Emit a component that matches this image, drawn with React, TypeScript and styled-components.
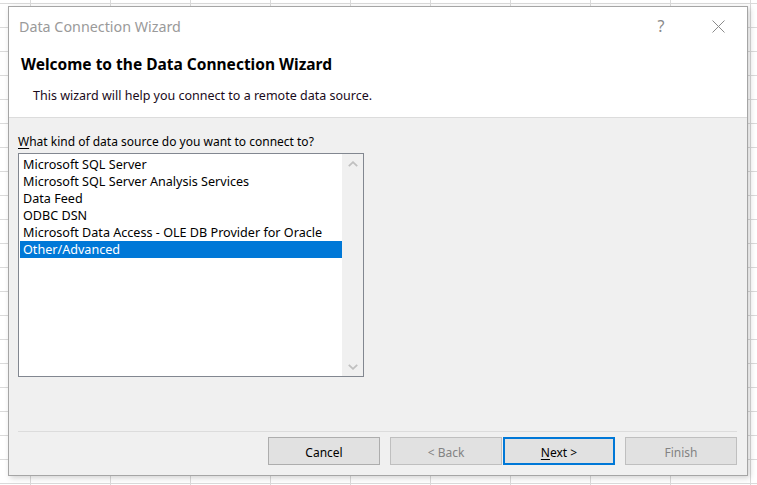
import React from "react";
import styled, { createGlobalStyle } from "styled-components";

const GlobalStyle = createGlobalStyle`
  html, body {
    margin: 0;
    padding: 0;
  }
  body {
    font-family: "Noto Sans", "Segoe UI", sans-serif;
    font-size: 12px;
    color: #000;
  }
`;

const Sheet = styled.div`
  width: 757px;
  height: 485px;
  box-sizing: border-box;
  padding: 6px 0 0 8px;
  background-color: #ffffff;
  background-image: linear-gradient(to right, #dadada 1px, transparent 1px),
    linear-gradient(to bottom, #dadada 1px, transparent 1px);
  background-size: 80px 24px;
  background-position: 30px 3px;
  overflow: hidden;
`;

const Dialog = styled.div`
  width: 740px;
  height: 470px;
  box-sizing: border-box;
  border: 1px solid #a5a5a5;
  background: #f0f0f0;
  box-shadow: 2px 2px 6px rgba(0, 0, 0, 0.18);
  display: flex;
  flex-direction: column;
`;

const TitleBar = styled.div`
  height: 38px;
  display: flex;
  align-items: center;
  background: #ffffff;
  padding: 0 0 0 10px;
`;

const Title = styled.div`
  flex: 1;
  font-size: 14.3px;
  color: #9a9a9a;
  padding-top: 1px;
`;

const TitleButton = styled.div<{ $w: number }>`
  width: ${(p) => p.$w}px;
  height: 30px;
  display: flex;
  align-items: center;
  justify-content: center;
  color: #8a8a8a;
  font-size: 16px;
`;

const Header = styled.div`
  background: #ffffff;
  height: 72px;
  border-bottom: 1px solid #dcdcdc;
  padding: 0 0 0 12px;
  display: flex;
  flex-direction: column;
`;

const Heading = styled.div`
  font-size: 15.5px;
  font-weight: 700;
  margin-top: 9px;
  line-height: 20px;
`;

const SubHeading = styled.div`
  font-size: 12.5px;
  margin: 14px 0 0 12px;
  line-height: 16px;
  color: #1a0a1a;
`;

const Body = styled.div`
  flex: 1;
  padding: 15px 0 0 9px;
  display: flex;
  flex-direction: column;
`;

const Label = styled.div`
  line-height: 17px;
  margin-bottom: 3px;
  u {
    text-decoration: underline;
    text-underline-offset: 2px;
  }
`;

const ListBox = styled.div`
  width: 346px;
  height: 224px;
  box-sizing: border-box;
  border: 1px solid #828790;
  background: #ffffff;
  display: flex;
`;

const Items = styled.div`
  flex: 1;
  padding: 2px 0 0 1px;
`;

const Item = styled.div<{ $selected?: boolean }>`
  height: 17px;
  line-height: 17px;
  font-size: 12.6px;
  padding-left: 3px;
  background: ${(p) => (p.$selected ? "#0078d7" : "transparent")};
  color: ${(p) => (p.$selected ? "#ffffff" : "#000000")};
  white-space: nowrap;
`;

const ScrollBar = styled.div`
  width: 21px;
  background: #f0f0f0;
  display: flex;
  flex-direction: column;
  justify-content: space-between;
  align-items: center;
  padding: 7px 0 6px;
`;

const Footer = styled.div`
  margin: 0 10px 0 9px;
  border-top: 1px solid #dcdcdc;
  padding: 5px 0 10px;
  display: flex;
  justify-content: flex-end;
`;

const Button = styled.button<{ $default?: boolean; $gap?: number }>`
  width: 112px;
  height: 28px;
  box-sizing: border-box;
  margin-left: ${(p) => p.$gap ?? 0}px;
  font-family: inherit;
  font-size: 12px;
  background: #e1e1e1;
  border: ${(p) => (p.$default ? "2px solid #0078d7" : "1px solid #adadad")};
  color: #000;
  padding: 2px 0 0;
  &:disabled {
    border-color: #bfbfbf;
    color: #838383;
  }
  u {
    text-underline-offset: 2px;
  }
`;

const Chevron = ({ up }: { up?: boolean }) => (
  <svg width="10" height="6" viewBox="0 0 10 6">
    <path
      d={up ? "M0.8 5.2 L5 1.2 L9.2 5.2" : "M0.8 0.8 L5 4.8 L9.2 0.8"}
      fill="none"
      stroke="#c0c0c0"
      strokeWidth="1.8"
    />
  </svg>
);

const sources = [
  "Microsoft SQL Server",
  "Microsoft SQL Server Analysis Services",
  "Data Feed",
  "ODBC DSN",
  "Microsoft Data Access - OLE DB Provider for Oracle",
  "Other/Advanced",
];

export default function App() {
  return (
    <>
      <GlobalStyle />
      <Sheet>
        <Dialog>
          <TitleBar>
            <Title>Data Connection Wizard</Title>
            <TitleButton $w={56}>?</TitleButton>
            <TitleButton $w={58}>
              <svg width="13" height="13" viewBox="0 0 13 13">
                <path d="M0.5 0.5 L12.5 12.5 M12.5 0.5 L0.5 12.5" stroke="#8a8a8a" strokeWidth="1" />
              </svg>
            </TitleButton>
          </TitleBar>
          <Header>
            <Heading>Welcome to the Data Connection Wizard</Heading>
            <SubHeading>This wizard will help you connect to a remote data source.</SubHeading>
          </Header>
          <Body>
            <Label>
              <u>W</u>hat kind of data source do you want to connect to?
            </Label>
            <ListBox>
              <Items>
                {sources.map((s, i) => (
                  <Item key={s} $selected={i === sources.length - 1}>
                    {s}
                  </Item>
                ))}
              </Items>
              <ScrollBar>
                <Chevron up />
                <Chevron />
              </ScrollBar>
            </ListBox>
          </Body>
          <Footer>
            <Button>Cancel</Button>
            <Button disabled $gap={10}>
              &lt; Back
            </Button>
            <Button $default $gap={1}>
              <u>N</u>ext &gt;
            </Button>
            <Button disabled $gap={10}>
              Finish
            </Button>
          </Footer>
        </Dialog>
      </Sheet>
    </>
  );
}
